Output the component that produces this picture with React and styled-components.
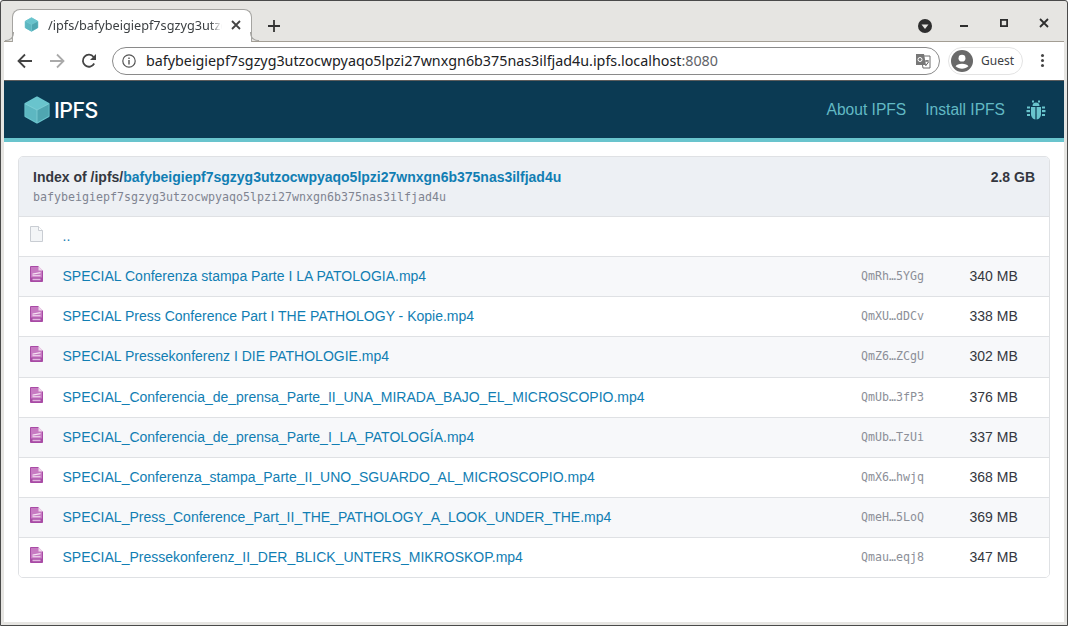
import React from 'react';
import styled, { createGlobalStyle } from 'styled-components';

const Global = createGlobalStyle`
  html, body { margin: 0; padding: 0; background: #fff; }
  * { box-sizing: border-box; }
`;

const Frame = styled.div`
  width: 1068px;
  height: 626px;
  display: flex;
  flex-direction: column;
  overflow: hidden;
  background: #e6e5e2;
  border: 1px solid #4a4a4a;
  border-radius: 3px 3px 0 0;
  padding: 0 3px 3px 3px;
  font-family: 'Liberation Sans', sans-serif;
`;

const TabStrip = styled.div`
  height: 41px;
  flex: none;
  display: flex;
  align-items: flex-end;
  padding-left: 8px;
  border-bottom: 1px solid #a39e94;
`;

const Tab = styled.div`
  width: 240px;
  height: 33px;
  margin-bottom: -1px;
  background: #fff;
  border: 1px solid #a5a4a1;
  border-bottom: none;
  border-radius: 8px 8px 0 0;
  display: flex;
  align-items: center;
  padding: 0 8px 3px 11px;
  gap: 9px;
  position: relative;
  &::before, &::after {
    content: '';
    position: absolute;
    bottom: 1px;
    width: 8px;
    height: 8px;
    border-bottom: 1px solid #a5a4a1;
  }
  &::before {
    left: -8px;
    border-right: 1px solid #a5a4a1;
    border-bottom-right-radius: 8px;
  }
  &::after {
    right: -8px;
    border-left: 1px solid #a5a4a1;
    border-bottom-left-radius: 8px;
  }
`;

const TabTitle = styled.span`
  font-family: 'Noto Sans', sans-serif;
  font-size: 12.7px;
  color: #3c4043;
  white-space: nowrap;
  width: 174px;
  flex: none;
  -webkit-mask-image: linear-gradient(to right, #000 162px, transparent 174px);
  mask-image: linear-gradient(to right, #000 162px, transparent 174px);
`;

const NewTab = styled.div`
  margin: 0 0 6px 15px;
  width: 16px;
  height: 16px;
  display: flex;
`;

const WindowControls = styled.div`
  margin-left: auto;
  align-self: flex-start;
  display: flex;
  align-items: flex-start;
  gap: 30px;
  padding: 17px 15px 0 0;
`;

const Badge = styled.div`
  display: flex;
  margin: 1px -3px 0 0;
`;

const Toolbar = styled.div`
  height: 39px;
  flex: none;
  background: #fff;
  display: flex;
  align-items: center;
  padding: 0 0 1px 13px;
  border-bottom: 1px solid #5d5d5d;
`;

const NavIcons = styled.div`
  display: flex;
  align-items: center;
  gap: 16px;
  width: 95px;
  flex: none;
`;

const Omnibox = styled.div`
  width: 828px;
  height: 28px;
  flex: none;
  border: 1px solid #8a8a8a;
  border-radius: 14px;
  display: flex;
  align-items: center;
  padding: 0 8px 0 9px;
  font-family: 'Noto Sans', sans-serif;
  font-size: 14.3px;
`;

const Url = styled.span`
  margin-left: 10px;
  color: #202124;
  flex: 1;
  white-space: nowrap;
`;

const Port = styled.span`
  color: #5f6368;
`;

const Guest = styled.div`
  margin-left: 8px;
  width: 75px;
  height: 28px;
  border: 1px solid #e3e3e3;
  border-radius: 14px;
  display: flex;
  align-items: center;
  padding-left: 2px;
  gap: 8px;
  font-family: 'Noto Sans', sans-serif;
  font-size: 12px;
  color: #3c4043;
  flex: none;
`;

const Dots = styled.div`
  margin-left: 18px;
  display: flex;
  flex-direction: column;
  gap: 2px;
  & > i {
    width: 3px;
    height: 3px;
    border-radius: 50%;
    background: #444;
    display: block;
  }
`;

const Page = styled.div`
  flex: 1;
  background: #fff;
  display: flex;
  flex-direction: column;
  min-height: 0;
`;

const SiteHeader = styled.header`
  height: 61px;
  flex: none;
  background: #0b3a53;
  border-bottom: 4px solid #69c4cd;
  display: flex;
  align-items: center;
  padding: 0 18px 0 19px;
`;

const Brand = styled.div`
  display: flex;
  align-items: center;
  gap: 3px;
  color: #fff;
  font-family: 'Inter', 'Liberation Sans', sans-serif;
  font-size: 21.3px;
  font-weight: 500;
  letter-spacing: -0.5px;
`;

const HeaderNav = styled.nav`
  margin-left: auto;
  display: flex;
  align-items: center;
  gap: 19px;
  font-size: 15.6px;
  color: #62b9c4;
  & > svg { margin-left: 2px; }
`;

const Content = styled.main`
  padding: 14px 14px 0 14px;
`;

const Listing = styled.section`
  border: 1px solid #dfe1e4;
  border-radius: 5px;
  overflow: hidden;
`;

const ListingHead = styled.div`
  height: 60px;
  background: #edf0f4;
  border-bottom: 1px solid #dfe1e4;
  display: flex;
  justify-content: space-between;
  padding: 12px 14px 0 14px;
  color: #34373f;
  font-size: 14px;
  font-weight: 700;
`;

const HeadLink = styled.span`
  color: #117eb3;
`;

const HashLine = styled.div`
  margin-top: 5px;
  font-family: 'DejaVu Sans Mono', monospace;
  font-size: 11.63px;
  font-weight: 400;
  color: #7f8491;
`;

const Row = styled.div`
  height: ${(p) => p.$h}px;
  display: flex;
  align-items: center;
  padding-bottom: 2px;
  background: ${(p) => (p.$odd ? '#f7f8fa' : '#fff')};
  border-top: ${(p) => (p.$first ? 'none' : '1px solid #dfe1e4')};
  font-size: 14px;
  color: #34373f;
`;

const IconCell = styled.div`
  width: 43.5px;
  padding-left: 11px;
  flex: none;
  display: flex;
  margin-top: -4px;
`;

const NameCell = styled.div`
  flex: 1;
  color: #117eb3;
`;

const CidCell = styled.div`
  width: 108px;
  flex: none;
  font-family: 'DejaVu Sans Mono', monospace;
  font-size: 11.63px;
  color: #8c8f98;
`;

const SizeCell = styled.div`
  width: 80px;
  flex: none;
  padding-left: 0.5px;
`;

const files = [
  ['SPECIAL Conferenza stampa Parte I LA PATOLOGIA.mp4', 'QmRh…5YGg', '340 MB', 40],
  ['SPECIAL Press Conference Part I THE PATHOLOGY - Kopie.mp4', 'QmXU…dDCv', '338 MB', 40],
  ['SPECIAL Pressekonferenz I DIE PATHOLOGIE.mp4', 'QmZ6…ZCgU', '302 MB', 41],
  ['SPECIAL_Conferencia_de_prensa_Parte_II_UNA_MIRADA_BAJO_EL_MICROSCOPIO.mp4', 'QmUb…3fP3', '376 MB', 40],
  ['SPECIAL_Conferencia_de_prensa_Parte_I_LA_PATOLOGÍA.mp4', 'QmUb…TzUi', '337 MB', 40],
  ['SPECIAL_Conferenza_stampa_Parte_II_UNO_SGUARDO_AL_MICROSCOPIO.mp4', 'QmX6…hwjq', '368 MB', 40],
  ['SPECIAL_Press_Conference_Part_II_THE_PATHOLOGY_A_LOOK_UNDER_THE.mp4', 'QmeH…5LoQ', '369 MB', 40],
  ['SPECIAL_Pressekonferenz_II_DER_BLICK_UNTERS_MIKROSKOP.mp4', 'Qmau…eqj8', '347 MB', 40],
];

const Cube = ({ size }) => (
  <svg width={size} height={size} viewBox="0 0 30 30" strokeLinejoin="round">
    <path d="M15 1.5 L27.5 8.5 V21.5 L15 28.5 L2.5 21.5 V8.5 Z" fill="#69c4cd" stroke="#69c4cd" strokeWidth="2" />
    <path d="M15 15 L27.5 8.5 V21.5 L15 28.5 Z" fill="#4fa6b1" />
    <path d="M15 15 L2.5 8.5 V21.5 L15 28.5 Z" fill="#5db7c1" />
    <path d="M15 15 L2.5 8.5 M15 15 L27.5 8.5 M15 15 V28.5" stroke="#8ad6dc" strokeWidth="0.7" fill="none" />
  </svg>
);

const Bug = () => (
  <svg width="20" height="20" viewBox="0 0 20 20" fill="#69c4cd">
    <rect x="6" y="0.5" width="2" height="2" />
    <rect x="12" y="0.5" width="2" height="2" />
    <path d="M6.5 6 C6.5 3.5 8 2.5 10 2.5 C12 2.5 13.5 3.5 13.5 6 Z" />
    <path d="M5 7 H9.4 V19.5 C7 19.3 5 17 5 14 Z" />
    <path d="M15 7 H10.6 V19.5 C13 19.3 15 17 15 14 Z" />
    <rect x="1" y="6.5" width="3" height="2" />
    <rect x="16" y="6.5" width="3" height="2" />
    <rect x="0.5" y="10" width="3.5" height="2.2" />
    <rect x="16" y="10" width="3.5" height="2.2" />
    <rect x="1" y="14" width="3" height="2" />
    <rect x="16" y="14" width="3" height="2" />
  </svg>
);

const BlankFile = () => (
  <svg width="13" height="16" viewBox="0 0 13 16">
    <path d="M.5.5H8.5L12.5 4.5V15.5H.5Z" fill="#f3f5f7" stroke="#c9cdd3" />
    <path d="M8.5.5V4.5H12.5" fill="#fff" stroke="#c9cdd3" />
  </svg>
);

const VideoFile = () => (
  <svg width="13" height="16" viewBox="0 0 13 16">
    <path d="M.5.5H8.5L12.5 4.5V15.5H.5Z" fill="#c77ac2" stroke="#a84ba5" />
    <path d="M8.5 0V4.5H13Z" fill="#f0d9ee" />
    <path d="M2.5 7.5L10.5 6V7.2L2.5 8.7ZM2.5 9.3H10.5V10.3H2.5Z" fill="#f5e3f3" />
    <rect x="1" y="11.5" width="11" height="4" fill="#a84ba5" />
    <rect x="2.5" y="12.7" width="8" height="1.5" fill="#e2b8df" />
  </svg>
);

const ArrowLeft = ({ color }) => (
  <svg width="16" height="16" viewBox="0 0 16 16" fill="none" stroke={color} strokeWidth="1.8">
    <path d="M15 8H2M8 1.5L1.5 8L8 14.5" />
  </svg>
);

const ArrowRight = ({ color }) => (
  <svg width="16" height="16" viewBox="0 0 16 16" fill="none" stroke={color} strokeWidth="1.8">
    <path d="M1 8H14M8 1.5L14.5 8L8 14.5" />
  </svg>
);

const Reload = () => (
  <svg width="16" height="16" viewBox="0 0 16 16" fill="none">
    <path d="M13.2 10.5A6 6 0 1 1 12.6 4" stroke="#444" strokeWidth="1.8" />
    <path d="M15 1V7H9Z" fill="#444" />
  </svg>
);

const Info = () => (
  <svg width="14" height="14" viewBox="0 0 14 14" fill="none" stroke="#555" strokeWidth="1.2">
    <circle cx="7" cy="7" r="6.2" />
    <path d="M7 6V10.5M7 3.5V5" strokeWidth="1.4" />
  </svg>
);

const Translate = () => (
  <svg width="16" height="16" viewBox="0 0 16 16">
    <path d="M6 3H15V15H8Z" fill="#fff" stroke="#6d6d6d" />
    <path d="M1 1H9L11 12H1Z" fill="#777" />
    <circle cx="5" cy="6.5" r="2" fill="none" stroke="#fff" />
    <path d="M10 8H14M12 7V8.5M10.5 13L13.5 9" stroke="#555" fill="none" />
  </svg>
);

const Avatar = () => (
  <svg width="22" height="22" viewBox="0 0 23 23">
    <circle cx="11.5" cy="11.5" r="11.5" fill="#696969" />
    <circle cx="11.5" cy="8.5" r="3.6" fill="#fff" />
    <path d="M4.8 17C6 13.5 17 13.5 18.2 17C16.5 18.8 14 19.5 11.5 19.5C9 19.5 6.5 18.8 4.8 17Z" fill="#fff" />
  </svg>
);

const ProfileBadge = () => (
  <svg width="14" height="14" viewBox="0 0 14 14">
    <circle cx="7" cy="7" r="7" fill="#2e2e2e" />
    <path d="M3.5 5.5H10.5L7 10Z" fill="#e6e5e2" />
  </svg>
);

const Minimize = () => (
  <svg width="10" height="10" viewBox="0 0 10 10"><rect x="1" y="7" width="8" height="2" fill="#2e2e2e" /></svg>
);

const Maximize = () => (
  <svg width="10" height="10" viewBox="0 0 10 10" fill="none"><rect x="1.9" y="1.9" width="6.2" height="6.2" stroke="#2e2e2e" strokeWidth="1.8" /></svg>
);

const Close = ({ color }) => (
  <svg width="10" height="10" viewBox="0 0 10 10" fill="none" stroke={color} strokeWidth="1.8" style={{ flex: 'none' }}>
    <path d="M1 1L9 9M9 1L1 9" />
  </svg>
);

const Plus = () => (
  <svg width="14" height="14" viewBox="0 0 14 14" stroke="#333" strokeWidth="1.8"><path d="M7 1V13M1 7H13" /></svg>
);

const App = () => (
  <>
    <Global />
    <Frame>
      <TabStrip>
        <Tab>
          <Cube size={15} />
          <TabTitle>/ipfs/bafybeigiepf7sgzyg3utzo</TabTitle>
          <Close color="#444" />
        </Tab>
        <NewTab><Plus /></NewTab>
        <WindowControls>
          <Badge><ProfileBadge /></Badge>
          <Minimize />
          <Maximize />
          <Close color="#2e2e2e" />
        </WindowControls>
      </TabStrip>
      <Toolbar>
        <NavIcons>
          <ArrowLeft color="#444" />
          <ArrowRight color="#aaa" />
          <Reload />
        </NavIcons>
        <Omnibox>
          <Info />
          <Url>
            bafybeigiepf7sgzyg3utzocwpyaqo5lpzi27wnxgn6b375nas3ilfjad4u.ipfs.localhost<Port>:8080</Port>
          </Url>
          <Translate />
        </Omnibox>
        <Guest>
          <Avatar />
          Guest
        </Guest>
        <Dots><i /><i /><i /></Dots>
      </Toolbar>
      <Page>
        <SiteHeader>
          <Brand>
            <Cube size={28} />
            IPFS
          </Brand>
          <HeaderNav>
            <span>About IPFS</span>
            <span>Install IPFS</span>
            <Bug />
          </HeaderNav>
        </SiteHeader>
        <Content>
          <Listing>
            <ListingHead>
              <div>
                <div>
                  Index of /ipfs/<HeadLink>bafybeigiepf7sgzyg3utzocwpyaqo5lpzi27wnxgn6b375nas3ilfjad4u</HeadLink>
                </div>
                <HashLine>bafybeigiepf7sgzyg3utzocwpyaqo5lpzi27wnxgn6b375nas3ilfjad4u</HashLine>
              </div>
              <div>2.8 GB</div>
            </ListingHead>
            <Row $h={39} $first>
              <IconCell><BlankFile /></IconCell>
              <NameCell>..</NameCell>
            </Row>
            {files.map(([name, cid, size, h], i) => (
              <Row key={name} $h={h} $odd={i % 2 === 0}>
                <IconCell><VideoFile /></IconCell>
                <NameCell>{name}</NameCell>
                <CidCell>{cid}</CidCell>
                <SizeCell>{size}</SizeCell>
              </Row>
            ))}
          </Listing>
        </Content>
      </Page>
    </Frame>
  </>
);

export default App;
